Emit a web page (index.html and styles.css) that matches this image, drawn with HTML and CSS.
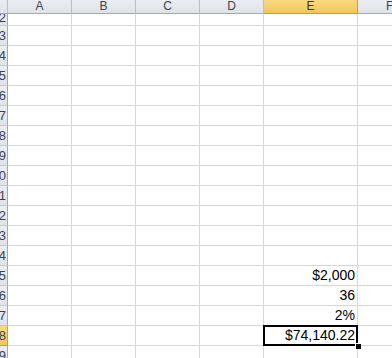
FILE: index.html
```html
<!DOCTYPE html>
<html>
<head>
<meta charset="utf-8">
<link rel="stylesheet" href="styles.css">
</head>
<body>
<div class="sheet">
  <div class="corner"></div>
  <div class="ch">A</div><div class="ch">B</div><div class="ch">C</div><div class="ch">D</div><div class="ch sel">E</div><div class="ch last">F</div>

  <div class="rh top"><span>2</span></div><div class="c"></div><div class="c"></div><div class="c"></div><div class="c"></div><div class="c"></div><div class="c"></div>
  <div class="rh"><span>3</span></div><div class="c"></div><div class="c"></div><div class="c"></div><div class="c"></div><div class="c"></div><div class="c"></div>
  <div class="rh"><span>4</span></div><div class="c"></div><div class="c"></div><div class="c"></div><div class="c"></div><div class="c"></div><div class="c"></div>
  <div class="rh"><span>5</span></div><div class="c"></div><div class="c"></div><div class="c"></div><div class="c"></div><div class="c"></div><div class="c"></div>
  <div class="rh"><span>6</span></div><div class="c"></div><div class="c"></div><div class="c"></div><div class="c"></div><div class="c"></div><div class="c"></div>
  <div class="rh"><span>7</span></div><div class="c"></div><div class="c"></div><div class="c"></div><div class="c"></div><div class="c"></div><div class="c"></div>
  <div class="rh"><span>8</span></div><div class="c"></div><div class="c"></div><div class="c"></div><div class="c"></div><div class="c"></div><div class="c"></div>
  <div class="rh"><span>9</span></div><div class="c"></div><div class="c"></div><div class="c"></div><div class="c"></div><div class="c"></div><div class="c"></div>
  <div class="rh"><span>10</span></div><div class="c"></div><div class="c"></div><div class="c"></div><div class="c"></div><div class="c"></div><div class="c"></div>
  <div class="rh"><span>11</span></div><div class="c"></div><div class="c"></div><div class="c"></div><div class="c"></div><div class="c"></div><div class="c"></div>
  <div class="rh"><span>12</span></div><div class="c"></div><div class="c"></div><div class="c"></div><div class="c"></div><div class="c"></div><div class="c"></div>
  <div class="rh"><span>13</span></div><div class="c"></div><div class="c"></div><div class="c"></div><div class="c"></div><div class="c"></div><div class="c"></div>
  <div class="rh"><span>14</span></div><div class="c"></div><div class="c"></div><div class="c"></div><div class="c"></div><div class="c"></div><div class="c"></div>
  <div class="rh"><span>15</span></div><div class="c"></div><div class="c"></div><div class="c"></div><div class="c"></div><div class="c num">$2,000</div><div class="c"></div>
  <div class="rh"><span>16</span></div><div class="c"></div><div class="c"></div><div class="c"></div><div class="c"></div><div class="c num">36</div><div class="c"></div>
  <div class="rh"><span>17</span></div><div class="c"></div><div class="c"></div><div class="c"></div><div class="c"></div><div class="c num">2%</div><div class="c"></div>
  <div class="rh sel"><span>18</span></div><div class="c"></div><div class="c"></div><div class="c"></div><div class="c"></div><div class="c num active">$74,140.22</div><div class="c"></div>
  <div class="rh"><span>19</span></div><div class="c"></div><div class="c"></div><div class="c"></div><div class="c"></div><div class="c"></div><div class="c"></div>
</div>
</body>
</html>
```
FILE: styles.css
```css
html, body {
  margin: 0;
  padding: 0;
  background: #ffffff;
  overflow: hidden;
}
.sheet {
  display: grid;
  grid-template-columns: 8px 64px 64px 64px 64px 94px 1fr;
  grid-template-rows: 14px 12px repeat(16, 20px) 20px;
  width: 392px;
  height: 358px;
  overflow: hidden;
  font-family: "Liberation Sans", Arial, sans-serif;
}
.corner, .ch, .rh {
  box-sizing: border-box;
  background: linear-gradient(#eaedf1, #dfe3e8);
  border-right: 1px solid #b6bec8;
  border-bottom: 1px solid #9eaab8;
  color: #3b4350;
  font-size: 12px;
}
.ch {
  display: flex;
  align-items: center;
  justify-content: center;
  line-height: 1;
  padding-bottom: 1px;
}
.ch.last { justify-content: flex-start; padding-left: 28px; }
.ch.sel, .rh.sel {
  background: linear-gradient(#f9d97f, #f1c75c);
  color: #3b3420;
  border-right-color: #c2a04a;
  border-bottom-color: #c2a04a;
}
.rh {
  position: relative;
  overflow: hidden;
  border-bottom-color: #c4cbd3;
  border-right-color: #9eaab8;
}
.rh span {
  position: absolute;
  right: 1px;
  top: 0;
  bottom: 0;
  width: 30px;
  display: flex;
  align-items: center;
  justify-content: flex-end;
  font-size: 13px;
  line-height: 1;
  color: #3b4350;
}
.rh.top span { align-items: flex-end; bottom: 1px; }
.c {
  box-sizing: border-box;
  border-right: 1px solid #d8d8d8;
  border-bottom: 1px solid #d8d8d8;
  font-size: 14px;
  color: #000000;
}
.num {
  display: flex;
  align-items: flex-end;
  justify-content: flex-end;
  padding-right: 2px;
  padding-bottom: 1px;
  line-height: 17px;
}
.active {
  position: relative;
}
.active::before {
  content: "";
  position: absolute;
  left: -1px;
  top: -1px;
  right: -1px;
  bottom: -1px;
  border: 2px solid #000000;
}
.active::after {
  content: "";
  position: absolute;
  right: -4px;
  bottom: -4px;
  width: 5px;
  height: 5px;
  background: #000000;
  border-left: 1px solid #ffffff;
  border-top: 1px solid #ffffff;
}
```
